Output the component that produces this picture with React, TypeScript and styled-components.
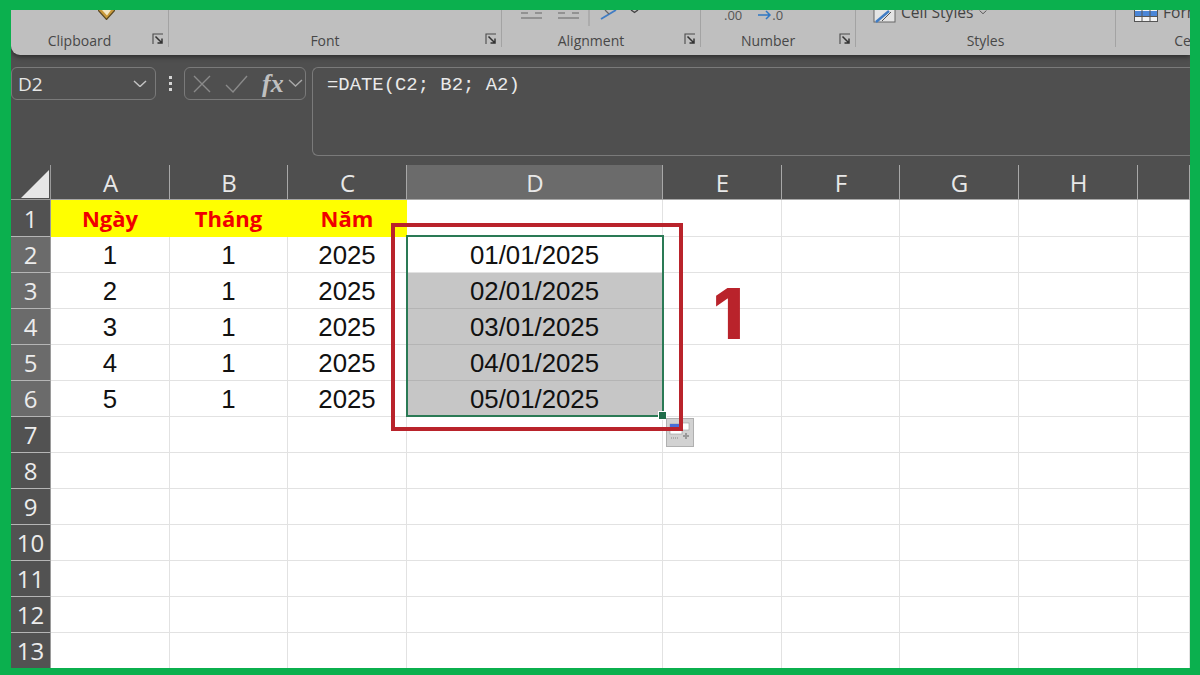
import React from 'react';
import styled, {createGlobalStyle} from "styled-components";

const GlobalStyle = createGlobalStyle`
  html, body {
    margin: 0;
    padding: 0;
    background: #0bb04e;
  }
`

const columns = [
    {name: 'A', width: 119},
    {name: 'B', width: 118},
    {name: 'C', width: 119},
    {name: 'D', width: 256, selected: true},
    {name: 'E', width: 119},
    {name: 'F', width: 118},
    {name: 'G', width: 119},
    {name: 'H', width: 119},
    {name: '', width: 52},
];

const cells: Record<number, string[]> = {
    1: ['Ngày', 'Tháng', 'Năm'],
    2: ['1', '1', '2025', '01/01/2025'],
    3: ['2', '1', '2025', '02/01/2025'],
    4: ['3', '1', '2025', '03/01/2025'],
    5: ['4', '1', '2025', '04/01/2025'],
    6: ['5', '1', '2025', '05/01/2025'],
};

const rows = Array.from({length: 13}, (_, i) => i + 1);

const Launcher = () => (
    <LauncherIcon viewBox="0 0 12 12">
        <path d="M1 11V1h10" fill="none" stroke="#4a4a4a" strokeWidth="1.1"/>
        <path d="M3.5 3.5l6 6M10 5.5V10H5.5" fill="none" stroke="#333" strokeWidth="1.5"/>
    </LauncherIcon>
);

const Chevron = ({color = '#555', width = 10}: { color?: string; width?: number }) => (
    <svg width={width} height={width * .55} viewBox="0 0 10 5.5" style={{flex: 'none'}}>
        <path d="M.7 .7L5 4.7 9.3 .7" fill="none" stroke={color} strokeWidth="1"/>
    </svg>
);

const Ribbon = () => (
    <RibbonBar>
        <Group $width={158} $launcher>
            <Tools $left={87}>
                <svg width="17" height="10" viewBox="0 0 17 10">
                    <path d="M0 0h17L9 9.5z" fill="#c99a3a"/>
                    <path d="M4 0h9L9 5.5z" fill="#f3e7c4"/>
                    <path d="M0 0l8.5 9.5L17 0" fill="none" stroke="#5b4a22" strokeWidth="1.2"/>
                </svg>
            </Tools>
            <Label>Clipboard</Label>
            <Launcher/>
        </Group>
        <Group $width={333} $launcher>
            <Tools/>
            <Label>Font</Label>
            <Launcher/>
        </Group>
        <Group $width={199} $launcher>
            <Tools $left={19}>
                <svg width="120" height="18" viewBox="0 0 120 18">
                    <path d="M0 3h7M14 3h7M0 8h21" fill="none" stroke="#666" strokeWidth="1.2"/>
                    <path d="M37 3h7M51 3h7M37 8h21" fill="none" stroke="#666" strokeWidth="1.2"/>
                    <path d="M68 0v16" stroke="#999" strokeWidth="1"/>
                    <path d="M80 9L95 0" fill="none" stroke="#3f7cc4" strokeWidth="1.8"/>
                    <path d="M84 0l4 4" fill="none" stroke="#666" strokeWidth="1.2"/>
                    <path d="M110 0l3.5 2.5L117 0" fill="none" stroke="#444" strokeWidth="1.4"/>
                </svg>
            </Tools>
            <Label>Alignment</Label>
            <Launcher/>
        </Group>
        <Group $width={155} $launcher>
            <Tools $left={23}>
                <SmallDigits>.00</SmallDigits>
                <NumberArrow width="14" height="10" viewBox="0 0 14 10">
                    <path d="M0 5h12M8 1l4 4-4 4" fill="none" stroke="#2f78c4" strokeWidth="1.5"/>
                </NumberArrow>
                <SmallDigits>.0</SmallDigits>
            </Tools>
            <Label>Number</Label>
            <Launcher/>
        </Group>
        <Group $width={260}>
            <Tools $left={17}>
                <svg width="23" height="13" viewBox="0 0 23 13" style={{flex: 'none'}}>
                    <rect x="1" y="-6" width="21" height="18" fill="#e4e4e4" stroke="#666"/>
                    <path d="M3 12L16 1" stroke="#3f7cc4" strokeWidth="2.4"/>
                    <path d="M9 11l9-9" stroke="#555" strokeWidth="1"/>
                </svg>
                <ToolText>Cell Styles</ToolText>
                <Chevron color="#444" width={8}/>
            </Tools>
            <Label>Styles</Label>
        </Group>
        <Group $width={148}>
            <Tools $left={18}>
                <svg width="24" height="12" viewBox="0 0 24 12" style={{flex: 'none'}}>
                    <rect x="0.5" y="-6" width="23" height="17.5" fill="#f2f2f2" stroke="#555"/>
                    <rect x="1" y="1" width="22" height="5" fill="#4a86d8"/>
                    <path d="M8 -6v18M16 -6v18M0 6.5h24" stroke="#555" strokeWidth="1"/>
                </svg>
                <ToolText>Format</ToolText>
            </Tools>
            <Label>Cells</Label>
        </Group>
    </RibbonBar>
);

const FormulaRow = () => (
    <FormulaBar>
        <NameBox>
            <span>D2</span>
            <Chevron color="#c4c4c4" width={14}/>
        </NameBox>
        <Grip>
            <i/><i/><i/>
        </Grip>
        <FxBox>
            <svg width="18" height="18" viewBox="0 0 18 18" style={{flex: 'none'}}>
                <path d="M1 1l16 16M17 1L1 17" fill="none" stroke="#8a8a8a" strokeWidth="1.4"/>
            </svg>
            <svg width="23" height="18" viewBox="0 0 23 18" style={{flex: 'none'}}>
                <path d="M1 10l7 7L22 1" fill="none" stroke="#8a8a8a" strokeWidth="1.4"/>
            </svg>
            <Fx>fx</Fx>
            <Chevron color="#a8a8a8" width={15}/>
        </FxBox>
        <FormulaInput>=DATE(C2; B2; A2)</FormulaInput>
    </FormulaBar>
);

const Sheet = () => (
    <SheetGrid>
        <Corner>
            <svg width="30" height="30" viewBox="0 0 30 30">
                <path d="M29 1v28H1z" fill="#e6e6e6"/>
            </svg>
        </Corner>
        {columns.map((c, i) => (
            <ColumnHead key={i} $selected={c.selected}>{c.name}</ColumnHead>
        ))}
        {rows.map(r => (
            <React.Fragment key={r}>
                <RowHead $selected={r >= 2 && r <= 6}>{r}</RowHead>
                {columns.map((c, i) => {
                    const value = cells[r]?.[i];
                    if (r === 1) {
                        return <TitleCell key={i} $filled={i < 3}>{value}</TitleCell>;
                    }
                    return <Cell key={i} $filled={i === 3 && r >= 3 && r <= 6}>{value}</Cell>;
                })}
            </React.Fragment>
        ))}
        <Selection>
            <FillHandle/>
        </Selection>
        <PasteOptions>
            <svg width="26" height="27" viewBox="0 0 26 27">
                <rect x="3" y="5" width="12" height="10" fill="#fff" stroke="#999" strokeWidth="0.6"/>
                <rect x="3" y="5" width="11" height="5" fill="#4a6fd8"/>
                <rect x="15" y="4" width="7" height="7" fill="#fff" stroke="#999" strokeWidth="0.6"/>
                <path d="M4 19h8" stroke="#888" strokeWidth="1" strokeDasharray="1 1"/>
                <path d="M19 14v6M16 17h6" stroke="#999" strokeWidth="2"/>
            </svg>
        </PasteOptions>
        <RedFrame/>
        <BigNumber>1</BigNumber>
    </SheetGrid>
);

export default function App() {
    return (
        <Frame>
            <GlobalStyle/>
            <Window>
                <Ribbon/>
                <FormulaRow/>
                <Sheet/>
            </Window>
        </Frame>
    );
}

const Frame = styled.div`
  width: 1200px;
  height: 675px;
  box-sizing: border-box;
  padding: 10px 10px 7px 11px;
  background: #0bb04e;
  overflow: hidden;
`
const Window = styled.div`
  height: 100%;
  background: #4f4f4f;
  display: flex;
  flex-direction: column;
  overflow: hidden;
`
const RibbonBar = styled.div`
  height: 45px;
  flex: none;
  display: flex;
  background: #bfbfbf;
  border-bottom-left-radius: 9px;
  overflow: hidden;
  font-family: "Open Sans", "Noto Sans", sans-serif;
  color: #474747;
  box-shadow: 0 2px 5px rgba(0, 0, 0, .45);
  position: relative;
  z-index: 1;
`
const Group = styled.div<{ $width: number; $launcher?: boolean }>`
  width: ${p => p.$width}px;
  flex: none;
  box-sizing: border-box;
  padding-right: ${p => p.$launcher ? 20 : 0}px;
  height: 37px;
  border-right: 1px solid #a3a3a3;
  display: flex;
  flex-direction: column;
  position: relative;
`
const Tools = styled.div<{ $left?: number }>`
  height: 21px;
  flex: none;
  display: flex;
  align-items: flex-start;
  gap: 5px;
  padding-left: ${p => p.$left ?? 0}px;
  overflow: hidden;
`
const Label = styled.div`
  font-size: 14px;
  line-height: 20px;
  text-align: center;
  white-space: nowrap;
`
const LauncherIcon = styled.svg`
  position: absolute;
  right: 4px;
  bottom: 2px;
  width: 12px;
  height: 12px;
`
const SmallDigits = styled.span`
  font-size: 13px;
  line-height: 14px;
  margin-top: -2px;
  color: #555;
`
const NumberArrow = styled.svg`
  flex: none;
  margin: 0 -5px 0 11px;
`
const ToolText = styled.span`
  font-size: 15.6px;
  line-height: 10px;
  margin-top: -3px;
  color: #444;
  white-space: nowrap;
`
const FormulaBar = styled.div`
  height: 110px;
  flex: none;
  box-sizing: border-box;
  padding-top: 12px;
  display: flex;
  align-items: flex-start;
`
const NameBox = styled.div`
  width: 145px;
  height: 33px;
  box-sizing: border-box;
  padding: 0 8px 0 6px;
  border: 1px solid #7a7a7a;
  border-radius: 6px;
  display: flex;
  align-items: center;
  justify-content: space-between;
  font: 19px "Open Sans", sans-serif;
  color: #e6e6e6;
`
const Grip = styled.div`
  width: 28px;
  height: 33px;
  display: flex;
  flex-direction: column;
  align-items: center;
  justify-content: center;
  gap: 3px;

  i {
    width: 3px;
    height: 3px;
    background: #d5d5d5;
  }
`
const FxBox = styled.div`
  width: 122px;
  height: 33px;
  box-sizing: border-box;
  padding: 0 2px 0 8px;
  border: 1px solid #7a7a7a;
  border-radius: 6px;
  display: flex;
  align-items: center;
  gap: 14px;
  margin-right: 6px;
`
const Fx = styled.span`
  width: 19px;
  margin-right: -7px;
  font: italic 700 26px/30px "Liberation Serif", serif;
  color: #c0c0c0;
`
const FormulaInput = styled.div`
  flex: 1;
  height: 89px;
  box-sizing: border-box;
  padding: 4px 0 0 14px;
  border: 1px solid #7a7a7a;
  border-right: none;
  border-radius: 6px 0 0 6px;
  font: 18.9px/26px "Liberation Mono", monospace;
  color: #eaeaea;
  white-space: nowrap;
`
const SheetGrid = styled.div`
  flex: 1;
  display: grid;
  grid-template-columns: 40px ${columns.map(c => `${c.width}px`).join(' ')};
  grid-template-rows: 35px 37px repeat(12, 36px);
  position: relative;
  overflow: hidden;
  background: #fff;
`
const Corner = styled.div`
  background: #4f4f4f;
  border-right: 1px solid #9a9a9a;
  border-bottom: 1px solid #9a9a9a;
  box-sizing: border-box;
  display: flex;
  align-items: flex-end;
  justify-content: flex-end;
`
const ColumnHead = styled.div<{ $selected?: boolean }>`
  background: ${p => p.$selected ? '#6b6b6b' : '#4f4f4f'};
  border-right: 1px solid #a8a8a8;
  border-bottom: 1px solid #a8a8a8;
  box-sizing: border-box;
  padding-left: 1px;
  display: flex;
  align-items: center;
  justify-content: center;
  font: 24px "Open Sans", sans-serif;
  color: #e8e8e8;
`
const RowHead = styled.div<{ $selected?: boolean }>`
  background: ${p => p.$selected ? '#6b6b6b' : '#525252'};
  border-right: 1px solid #9a9a9a;
  border-bottom: 1px solid #b5b5b5;
  box-sizing: border-box;
  display: flex;
  align-items: center;
  justify-content: center;
  font: 24px "Open Sans", sans-serif;
  color: #ececec;
`
const Cell = styled.div<{ $filled?: boolean }>`
  background: ${p => p.$filled ? '#c6c6c6' : '#fff'};
  border-right: 1px solid ${p => p.$filled ? '#c6c6c6' : '#e2e2e2'};
  border-bottom: 1px solid ${p => p.$filled ? '#b4b4b4' : '#e2e2e2'};
  box-sizing: border-box;
  padding-top: 2px;
  display: flex;
  align-items: center;
  justify-content: center;
  font: 25.8px "Liberation Sans", sans-serif;
  color: #111;
`
const TitleCell = styled.div<{ $filled?: boolean }>`
  background: ${p => p.$filled ? '#ffff00' : '#fff'};
  border-right: 1px solid ${p => p.$filled ? '#ffff00' : '#e2e2e2'};
  border-bottom: 1px solid ${p => p.$filled ? '#ffff00' : '#e2e2e2'};
  box-sizing: border-box;
  display: flex;
  align-items: center;
  justify-content: center;
  font: 700 22px "Open Sans", sans-serif;
  color: #f00000;
`
const Selection = styled.div`
  position: absolute;
  left: 395px;
  top: 70px;
  width: 258px;
  height: 182px;
  box-sizing: border-box;
  border: 2px solid #2a7a55;
`
const FillHandle = styled.div`
  position: absolute;
  right: -5px;
  bottom: -5px;
  width: 7px;
  height: 7px;
  background: #1f6e4a;
  border: 1px solid #fff;
`
const PasteOptions = styled.div`
  position: absolute;
  left: 655px;
  top: 253px;
  width: 28px;
  height: 29px;
  box-sizing: border-box;
  background: #d2d2d2;
  border: 1px solid #b0b0b0;
`
const RedFrame = styled.div`
  position: absolute;
  left: 380px;
  top: 58px;
  width: 292px;
  height: 208px;
  box-sizing: border-box;
  border: 4px solid #b9232b;
`
const BigNumber = styled.div`
  position: absolute;
  left: 702px;
  top: 105px;
  font: 800 70px/88px Inter, sans-serif;
  color: #b9232b;
`
